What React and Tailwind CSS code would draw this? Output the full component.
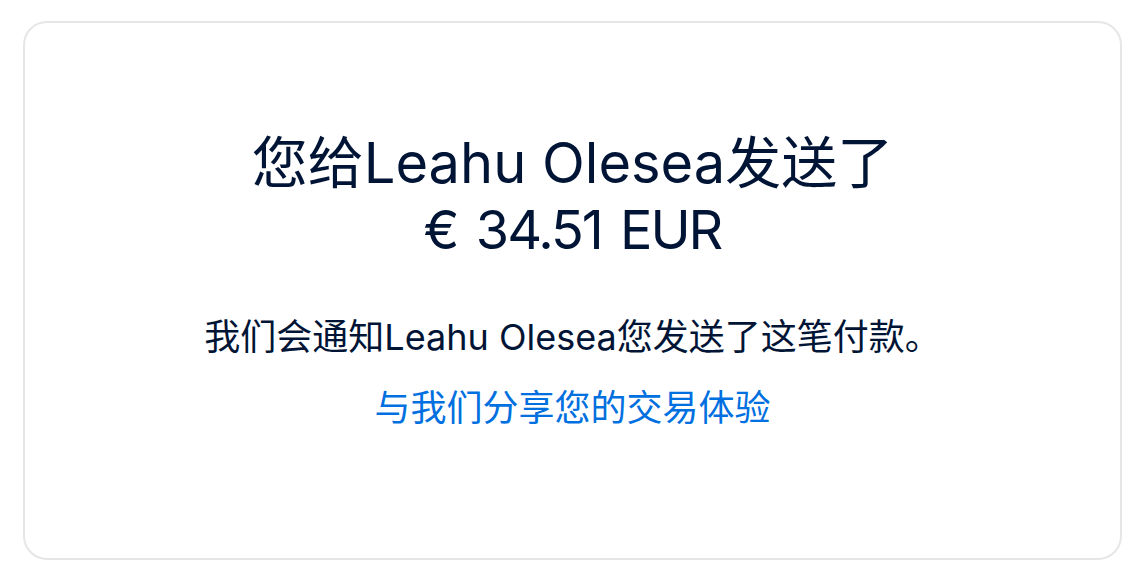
export default function App() {
  const font = { fontFamily: '"Inter", "Noto Sans CJK SC", sans-serif' };
  return (
    <div className="w-[1140px] h-[575px] bg-white pt-[21px] pl-[23px] pr-[18px]" style={font}>
      <div className="h-[539px] rounded-[24px] border-2 border-[#e6e6e6] bg-white flex flex-col items-center pt-[106px]">
        <h1 className="font-normal text-[#001435] text-center">
          <div className="text-[56px] leading-[68px]">您给Leahu Olesea发送了</div>
          <div className="text-[54px] leading-[66px] tracking-[-2px] [word-spacing:5px]">€ 34.51 EUR</div>
        </h1>
        <p className="mt-[50px] text-[36px] leading-[48px] text-[#001435] text-center">
          我们会通知Leahu Olesea您发送了这笔付款。
        </p>
        <a href="#" className="mt-[23px] text-[36px] leading-[48px] text-[#0070e0] text-center">
          与我们分享您的交易体验
        </a>
      </div>
    </div>
  );
}
